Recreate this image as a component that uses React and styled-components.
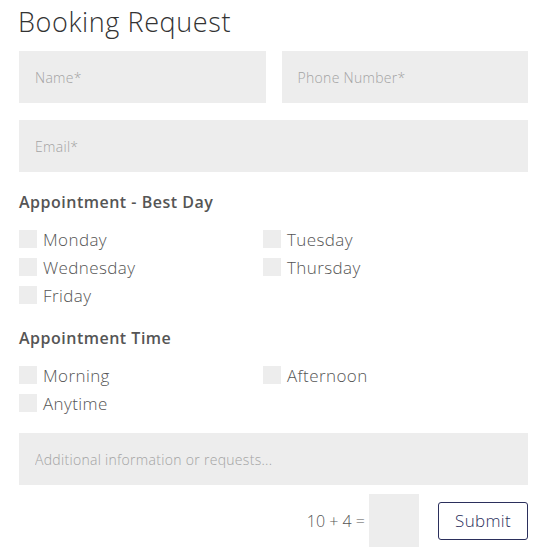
import React from "react";
import styled, { createGlobalStyle } from "styled-components";

const Global = createGlobalStyle`
  html, body { margin: 0; padding: 0; background: #fff; }
  body { font-family: "Open Sans", "Liberation Sans", sans-serif; }
  * { box-sizing: border-box; }
`;

const Form = styled.form`
  width: 556px;
  padding: 4px 28px 0 19px;
  display: flex;
  flex-direction: column;
`;

const Title = styled.h1`
  margin: 0 0 0 -1px;
  font-family: "Open Sans", sans-serif;
  font-weight: 300;
  font-size: 27px;
  line-height: 36px;
  color: #333;
  letter-spacing: 0.6px;
`;

const Row = styled.div`
  display: flex;
  gap: 16px;
  margin-top: ${(p) => p.$mt || 0}px;
`;

const Field = styled.input`
  flex: 1;
  min-width: 0;
  height: 52px;
  border: none;
  background: #ededed;
  padding: 0 16px;
  font-family: "Open Sans", sans-serif;
  font-size: 14px;
  font-weight: 300;
  letter-spacing: 0.3px;
  color: #444;
  outline: none;
  &::placeholder { color: #a3a3a3; }
`;

const Heading = styled.h3`
  margin: ${(p) => p.$mt}px 0 0 0;
  font-family: "Open Sans", sans-serif;
  font-weight: 600;
  font-size: 16px;
  letter-spacing: 0.5px;
  line-height: 20px;
  color: #555;
`;

const Options = styled.div`
  display: grid;
  grid-template-columns: 244px 244px;
  grid-auto-rows: 28px;
  margin-top: ${(p) => p.$mt}px;
`;

const Option = styled.label`
  display: flex;
  align-items: center;
  gap: 6px;
  font-family: "Open Sans", sans-serif;
  font-weight: 300;
  font-size: 17px;
  letter-spacing: 0.4px;
  color: #555;
`;

const Box = styled.span`
  width: 18px;
  height: 18px;
  background: #ededed;
  display: inline-block;
  flex: none;
`;

const Footer = styled.div`
  display: flex;
  justify-content: flex-end;
  align-items: center;
  margin-top: 9px;
`;

const Equation = styled.span`
  font-family: "Open Sans", sans-serif;
  font-weight: 300;
  font-size: 16px;
  color: #555;
  margin-right: 4px;
`;

const Answer = styled.input`
  width: 50px;
  height: 53px;
  border: none;
  background: #ededed;
  outline: none;
`;

const Submit = styled.button`
  margin-left: 19px;
  width: 90px;
  height: 38px;
  border: 1px solid #2b2f5c;
  border-radius: 3px;
  background: #fff;
  color: #2b2f5c;
  font-family: "Open Sans", sans-serif;
  font-weight: 300;
  font-size: 17px;
  letter-spacing: 0.3px;
`;

const days = ["Monday", "Tuesday", "Wednesday", "Thursday", "Friday"];
const times = ["Morning", "Afternoon", "Anytime"];

export default function App() {
  return (
    <>
      <Global />
      <Form onSubmit={(e) => e.preventDefault()}>
        <Title>Booking Request</Title>
        <Row $mt={11}>
          <Field placeholder="Name*" />
          <Field placeholder="Phone Number*" />
        </Row>
        <Row $mt={17}>
          <Field placeholder="Email*" />
        </Row>
        <Heading $mt={20}>Appointment - Best Day</Heading>
        <Options $mt={13}>
          {days.map((d) => (
            <Option key={d}><Box />{d}</Option>
          ))}
        </Options>
        <Heading $mt={19}>Appointment Time</Heading>
        <Options $mt={13}>
          {times.map((d) => (
            <Option key={d}><Box />{d}</Option>
          ))}
        </Options>
        <Row $mt={16}>
          <Field placeholder="Additional information or requests..." />
        </Row>
        <Footer>
          <Equation>10 + 4 =</Equation>
          <Answer />
          <Submit type="submit">Submit</Submit>
        </Footer>
      </Form>
    </>
  );
}
